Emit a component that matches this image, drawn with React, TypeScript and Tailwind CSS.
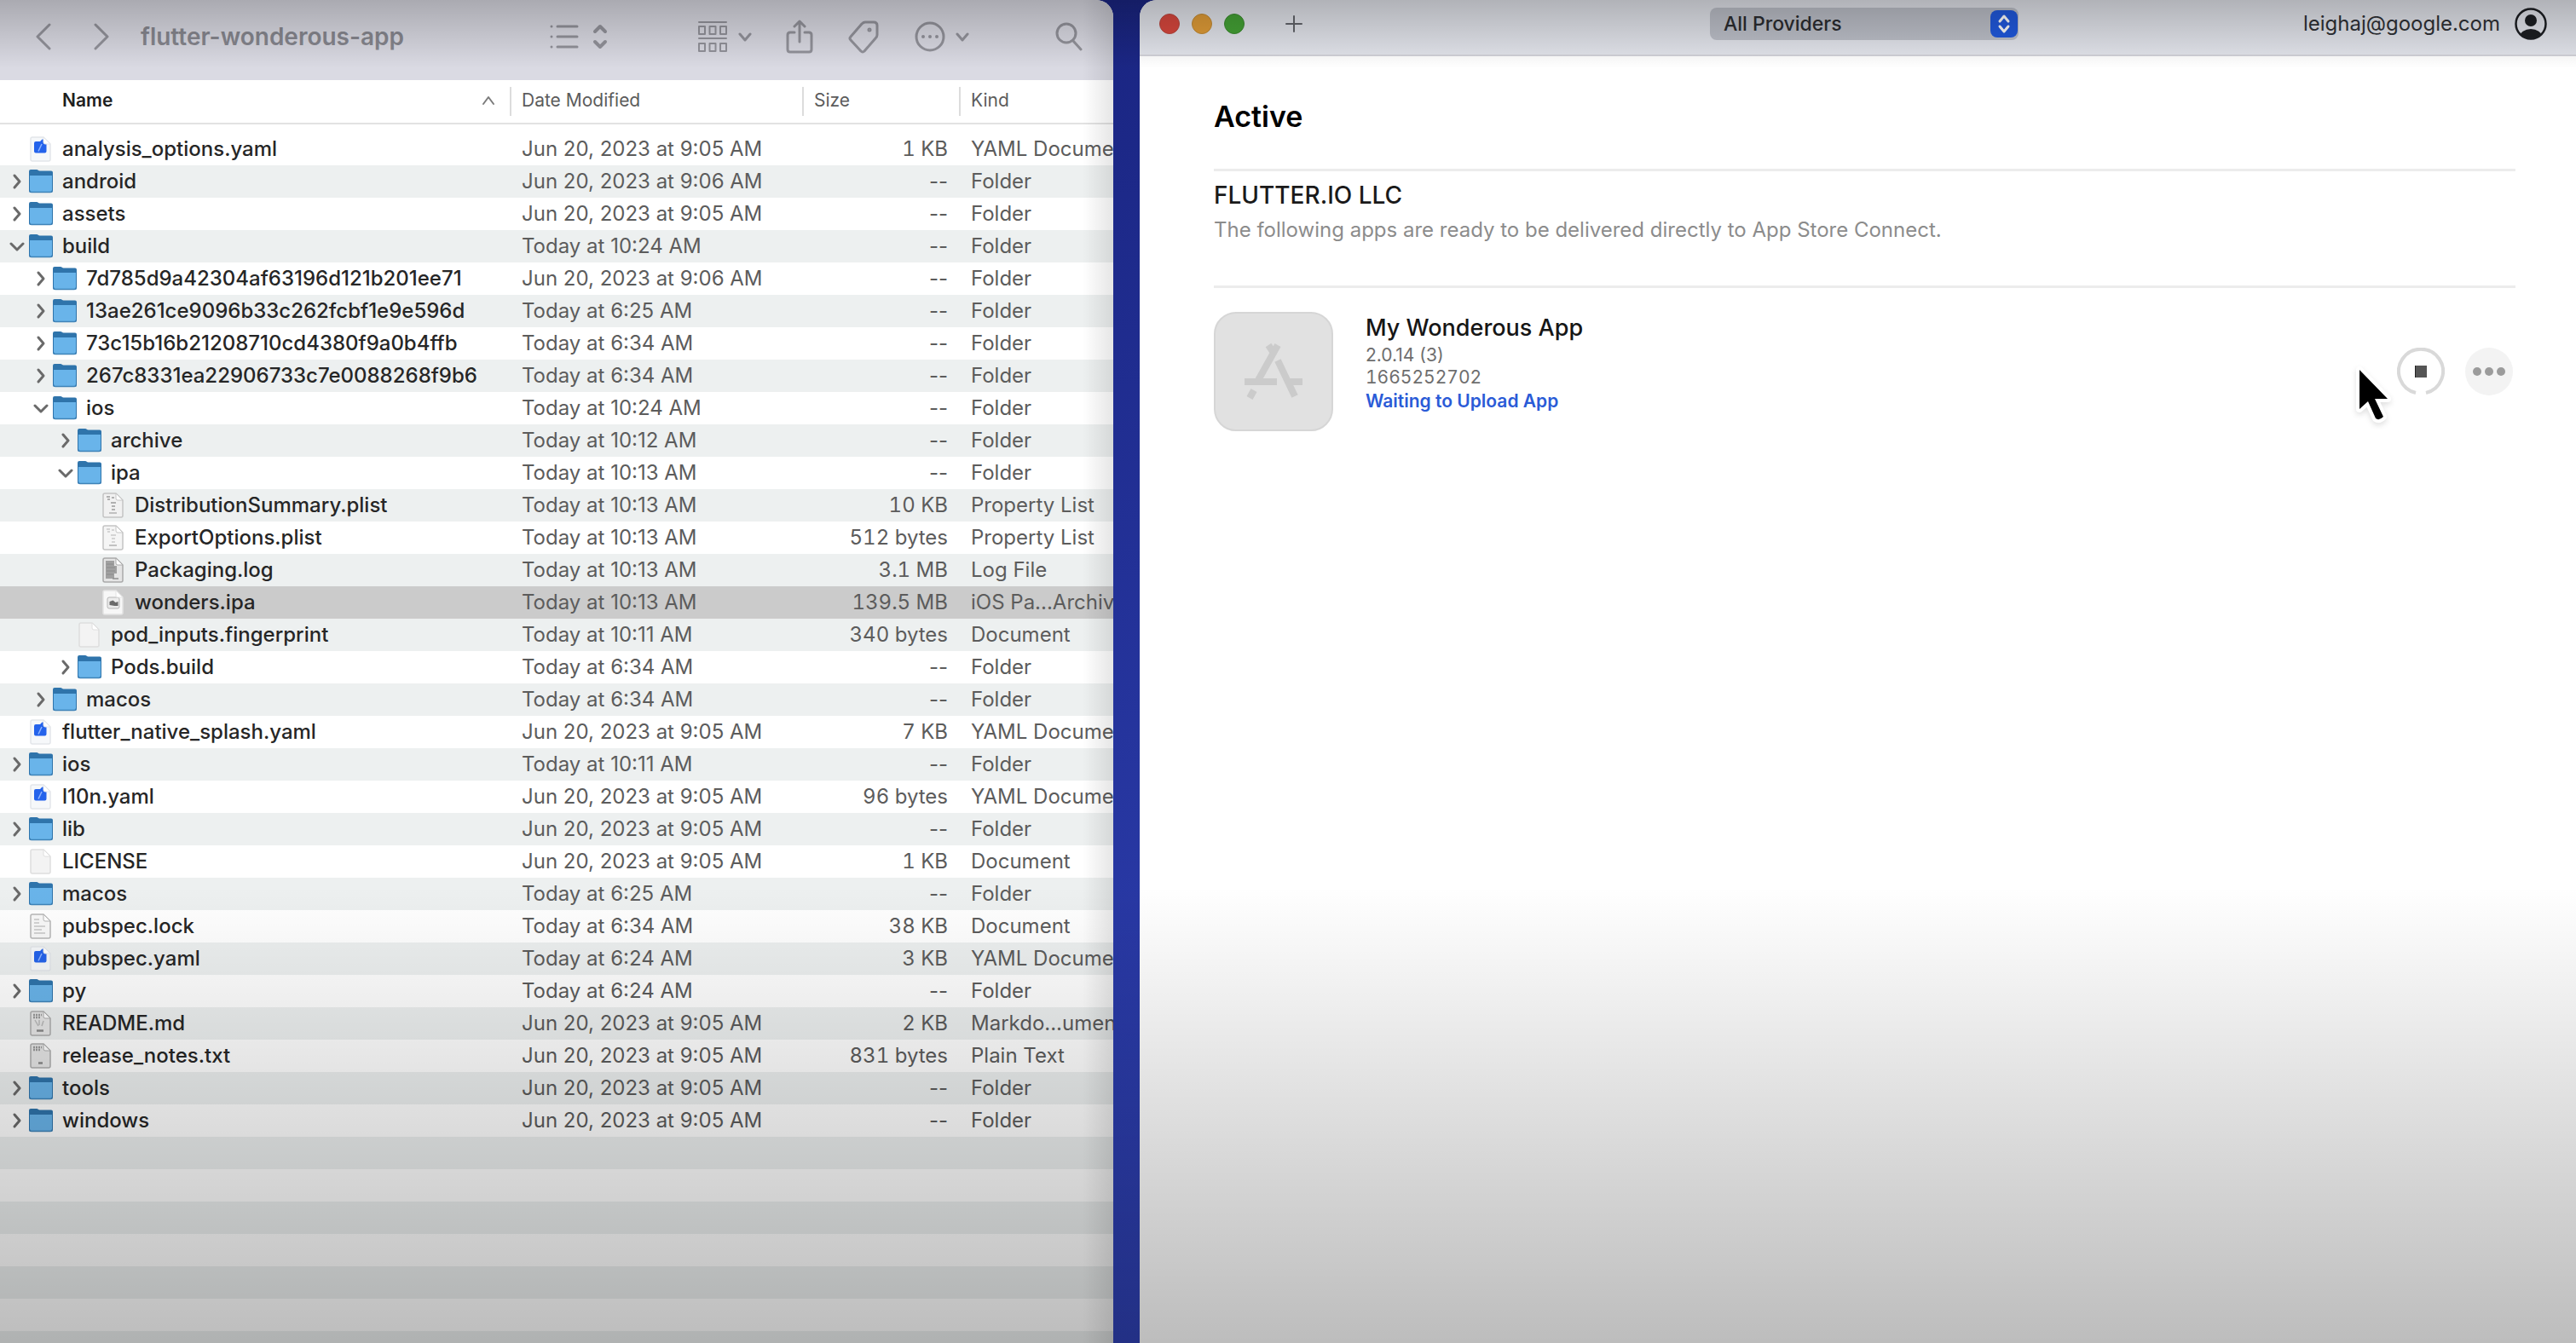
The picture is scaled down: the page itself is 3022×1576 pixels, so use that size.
import type { ReactNode } from "react";

type IconKind = "folder" | "flutter" | "blank" | "plist" | "plistLight" | "log" | "ipa" | "lock" | "md" | "txt";

type Entry = {
  name: string;
  level: 0 | 1 | 2 | 3;
  icon: IconKind;
  open?: boolean;
  selected?: boolean;
  date: string;
  size: string;
  kind: string;
};

const J5 = "Jun 20, 2023 at 9:05 AM";
const J6 = "Jun 20, 2023 at 9:06 AM";

function folder(name: string, level: Entry["level"], date: string, open = false): Entry {
  return { name, level, icon: "folder", open, date, size: "--", kind: "Folder" };
}

function file(name: string, level: Entry["level"], icon: IconKind, date: string, size: string, kind: string): Entry {
  return { name, level, icon, date, size, kind };
}

const entries: Entry[] = [
  file("analysis_options.yaml", 0, "flutter", J5, "1 KB", "YAML Document"),
  folder("android", 0, J6),
  folder("assets", 0, J5),
  folder("build", 0, "Today at 10:24 AM", true),
  folder("7d785d9a42304af63196d121b201ee71", 1, J6),
  folder("13ae261ce9096b33c262fcbf1e9e596d", 1, "Today at 6:25 AM"),
  folder("73c15b16b21208710cd4380f9a0b4ffb", 1, "Today at 6:34 AM"),
  folder("267c8331ea22906733c7e0088268f9b6", 1, "Today at 6:34 AM"),
  folder("ios", 1, "Today at 10:24 AM", true),
  folder("archive", 2, "Today at 10:12 AM"),
  folder("ipa", 2, "Today at 10:13 AM", true),
  file("DistributionSummary.plist", 3, "plist", "Today at 10:13 AM", "10 KB", "Property List"),
  file("ExportOptions.plist", 3, "plistLight", "Today at 10:13 AM", "512 bytes", "Property List"),
  file("Packaging.log", 3, "log", "Today at 10:13 AM", "3.1 MB", "Log File"),
  { ...file("wonders.ipa", 3, "ipa", "Today at 10:13 AM", "139.5 MB", "iOS Pa...Archive"), selected: true },
  file("pod_inputs.fingerprint", 2, "blank", "Today at 10:11 AM", "340 bytes", "Document"),
  folder("Pods.build", 2, "Today at 6:34 AM"),
  folder("macos", 1, "Today at 6:34 AM"),
  file("flutter_native_splash.yaml", 0, "flutter", J5, "7 KB", "YAML Document"),
  folder("ios", 0, "Today at 10:11 AM"),
  file("l10n.yaml", 0, "flutter", J5, "96 bytes", "YAML Document"),
  folder("lib", 0, J5),
  file("LICENSE", 0, "blank", J5, "1 KB", "Document"),
  folder("macos", 0, "Today at 6:25 AM"),
  file("pubspec.lock", 0, "lock", "Today at 6:34 AM", "38 KB", "Document"),
  file("pubspec.yaml", 0, "flutter", "Today at 6:24 AM", "3 KB", "YAML Document"),
  folder("py", 0, "Today at 6:24 AM"),
  file("README.md", 0, "md", J5, "2 KB", "Markdo...ument"),
  file("release_notes.txt", 0, "txt", J5, "831 bytes", "Plain Text"),
  folder("tools", 0, J5),
  folder("windows", 0, J5),
];

const indent = ["pl-2", "pl-[36px]", "pl-[65px]", "pl-[93px]"];

function Stroke({ className, box, width = 2, children }: { className: string; box: string; width?: number; children: ReactNode }) {
  return (
    <svg className={className} viewBox={box} fill="none" stroke="currentColor" strokeWidth={width} strokeLinecap="round" strokeLinejoin="round" aria-hidden="true">
      {children}
    </svg>
  );
}

function Page({ fill = "#fafafa", edge = "#c4c4c4", children }: { fill?: string; edge?: string; children?: ReactNode }) {
  return (
    <svg className="h-[30px] w-7 shrink-0" viewBox="0 0 28 30" aria-hidden="true">
      <path d="M4 1h13l8 8v18a2 2 0 0 1-2 2h-19a2 2 0 0 1-2-2v-24a2 2 0 0 1 2-2z" fill={fill} stroke={edge} strokeWidth="1.500" />
      {children}
      <path d="M17 1v6a2 2 0 0 0 2 2h6z" fill="#fff" stroke={edge} strokeLinejoin="round" />
    </svg>
  );
}

function FileIcon({ kind }: { kind: IconKind }) {
  switch (kind) {
    case "folder":
      return (
        <svg className="h-[30px] w-7 shrink-0" viewBox="0 0 28 30" aria-hidden="true">
          <path d="M0 3a2 2 0 0 1 2-2h7c1.500 0 2 1.500 3.500 1.500h13.500a2 2 0 0 1 2 2v21.500a2 2 0 0 1-2 2h-24a2 2 0 0 1-2-2z" fill="#2f74ab" />
          <path d="M1 8h26v17.500a2 2 0 0 1-2 2h-22a2 2 0 0 1-2-2z" fill="#69b4ea" />
          <path d="M1 25.500q0 2 2 2h22q2 0 2-2" fill="none" stroke="#3f83b8" strokeWidth="1.500" />
        </svg>
      );
    case "flutter":
      return (
        <Page fill="#f6f8fa" edge="#e3e6ea">
          <path d="M6 8q0-2 2-2h5l2.500-2.500h3.500v5h1.500v9q0 2-2 2h-10.500q-2 0-2-2z" fill="#2463eb" />
          <path d="M15 9l-4 8.500" stroke="#8fb4ff" strokeWidth="1.500" />
        </Page>
      );
    case "plist":
    case "plistLight":
      return (
        <Page fill={kind === "plist" ? "#f1f1f1" : "#f5f5f5"}>
          <path d="M6 5h4M7 8h3M12 6h3M11 12h6M12 16h4M12 20h4" stroke={kind === "plist" ? "#b0b0b0" : "#d4d4d4"} strokeWidth="2" />
          <path d="M9 24h9" stroke="#b0b0b0" strokeWidth="1.500" />
        </Page>
      );
    case "log":
      return (
        <Page fill="#e4e4e4" edge="#a9a9a9">
          <path d="M5 4h10v6h3v9h-3v6h-10z" fill="#a0a0a0" />
          <path d="M6 8h8M6 12h10M6 16h10M6 20h8" stroke="#8a8a8a" />
          <path d="M13 25h7" stroke="#8f8f8f" strokeWidth="1.500" />
        </Page>
      );
    case "ipa":
      return (
        <Page fill="#f7f7f7" edge="#e4e4e4">
          <rect x="7" y="9" width="14" height="13" rx="2" fill="#ececec" stroke="#b5b5b5" />
          <path d="M9.500 18v-4l4-1.500 3 2.500 3-1v5h-4z" fill="#6b6b6b" />
        </Page>
      );
    case "lock":
      return (
        <Page fill="#f8f8f8" edge="#b7b7b7">
          <path d="M6 7h6M6 11h6M6 15h13M6 19h9M6 23h13" stroke="#c6c6c6" strokeWidth="1.500" />
        </Page>
      );
    case "md":
    case "txt":
      return (
        <Page fill="#e6e6e6" edge="#adadad">
          <path d="M5 5h10M5 8h9" stroke="#999" strokeWidth="2.500" strokeDasharray="2 1" />
          {kind === "md" && <path d="M7 11l4 7M12 11v6M17 12l-2 6" stroke="#b9b9b9" strokeWidth="1.500" />}
          <path d={kind === "md" ? "M9 23.500h8" : "M11 23.500h5"} stroke="#8a8a8a" strokeWidth="2.500" />
        </Page>
      );
    default:
      return <Page fill="#f3f3f3" edge="#dedede" />;
  }
}

function ToolButton({ label, className, children }: { label: string; className: string; children: ReactNode }) {
  return (
    <button type="button" aria-label={label} className={`flex shrink-0 items-center ${className}`}>
      {children}
    </button>
  );
}

function SmallChevron() {
  return (
    <Stroke className="h-4 w-4" box="0 0 16 16" width={3}>
      <path d="M2 5l6 7 6-7" />
    </Stroke>
  );
}

function FinderToolbar() {
  return (
    <header className="flex h-[94px] shrink-0 items-center bg-[#dadae3] pr-9 pb-2 pl-10 text-[#93939b]">
      <ToolButton label="Back" className="mr-[49px]">
        <Stroke className="h-8 w-5" box="0 0 20 32" width={3}>
          <path d="M18 2l-14 14 14 14" />
        </Stroke>
      </ToolButton>
      <ToolButton label="Forward" className="mr-9">
        <Stroke className="h-8 w-5" box="0 0 20 32" width={3}>
          <path d="M3 2l14 14-14 14" />
        </Stroke>
      </ToolButton>
      <h1 className="text-[28px] leading-9 font-semibold whitespace-nowrap text-[#87878f]">flutter-wonderous-app</h1>
      <div className="flex flex-1 items-center justify-end">
        <ToolButton label="List view" className="mr-[104px] gap-[14px]">
          <Stroke className="h-8 w-9" box="0 0 36 32" width={3}>
            <path d="M10 4h23M10 16h23M10 28h23M3 4v0M3 16v0M3 28v0" />
          </Stroke>
          <Stroke className="h-8 w-5" box="0 0 20 32" width={4}>
            <path d="M4 10l6-6 6 6M4 22l6 6 6-6" />
          </Stroke>
        </ToolButton>
        <ToolButton label="Group" className="mr-[40px] gap-3">
          <Stroke className="h-10 w-9" box="0 0 36 40" width={2}>
            <path d="M2 3h32M2 22h32" />
            <path d="M2 8h7v9h-7zM14.500 8h7v9h-7zM27 8h7v9h-7zM2 28h7v9h-7zM14.500 28h7v9h-7zM27 28h7v9h-7z" />
          </Stroke>
          <SmallChevron />
        </ToolButton>
        <ToolButton label="Share" className="mr-[41px]">
          <Stroke className="h-10 w-8" box="0 0 32 40" width={3}>
            <path d="M10 15h-5q-3 0-3 3v17q0 3 3 3h22q3 0 3-3v-17q0-3-3-3h-5M16 26v-24M10 8l6-6 6 6" />
          </Stroke>
        </ToolButton>
        <ToolButton label="Tags" className="mr-[42px]">
          <Stroke className="h-10 w-9" box="0 0 36 40" width={3}>
            <path d="M3 20l13-15q2-2 4-2l10 0q4 0 4 4v11q0 2-2 4l-13 15q-2 2-4 0l-12-13q-2-2 0-4z" />
            <circle cx="25" cy="12" r="1" />
          </Stroke>
        </ToolButton>
        <ToolButton label="More actions" className="mr-[101px] gap-3">
          <Stroke className="h-9 w-9" box="0 0 36 36" width={3}>
            <circle cx="18" cy="18" r="16" />
            <path d="M10 18v0M18 18v0M26 18v0" strokeWidth="4" />
          </Stroke>
          <SmallChevron />
        </ToolButton>
        <ToolButton label="Search" className="">
          <Stroke className="h-9 w-8" box="0 0 32 36" width={3}>
            <circle cx="13" cy="14" r="11" />
            <path d="M21 23l9 10" />
          </Stroke>
        </ToolButton>
      </div>
    </header>
  );
}

function HeadCell({ children }: { children: ReactNode }) {
  return (
    <th scope="col" className="p-0 text-left font-normal text-[#5c5c5c]">
      <div className="flex h-[34px] items-center border-l-2 border-[#dcdcdc] pb-[3px] pl-3">{children}</div>
    </th>
  );
}

function EntryRow({ entry }: { entry: Entry }) {
  return (
    <tr className={entry.selected ? "h-[38px] bg-[#cbcbcb]" : "h-[38px] odd:bg-white even:bg-[#edf0f0]"}>
      <td className="p-0">
        <div className={`flex items-center ${indent[entry.level]}`}>
          {entry.icon === "folder" ? (
            <button type="button" aria-label={`Toggle ${entry.name}`} aria-expanded={entry.open} className="mr-1 flex h-6 w-[22px] shrink-0 items-center justify-center text-[#6a6a6a]">
              <Stroke className="h-5 w-5" box="0 0 20 20" width={3}>
                <path d={entry.open ? "M4 7l7 7 7-7" : "M8 3l6 7-6 7"} />
              </Stroke>
            </button>
          ) : (
            <span className="mr-1 w-[22px] shrink-0" />
          )}
          <FileIcon kind={entry.icon} />
          <span className="ml-[11px] font-medium whitespace-nowrap text-[#262626]">{entry.name}</span>
        </div>
      </td>
      <td className="p-0 pl-[14px] whitespace-nowrap">{entry.date}</td>
      <td className={entry.size === "--" ? "p-0 pr-[13px] text-right" : "p-0 pr-[13px] text-right whitespace-nowrap tabular-nums"}>{entry.size}</td>
      <td className="overflow-hidden p-0 pl-[14px] whitespace-nowrap">{entry.kind}</td>
    </tr>
  );
}

function FinderWindow() {
  return (
    <section className="relative flex min-w-0 flex-col overflow-hidden rounded-tr-[20px] bg-white">
      <FinderToolbar />
      <table className="w-full table-fixed border-collapse text-[24px] leading-[30px] text-[#5c5c5c]">
        <colgroup>
          <col />
          <col className="w-[343px]" />
          <col className="w-[184px]" />
          <col className="w-[181px]" />
        </colgroup>
        <thead className="text-[21px]">
          <tr className="h-[51px] border-b-2 border-[#e2e2e2]">
            <th scope="col" aria-sort="ascending" className="p-0 text-left font-semibold text-[#1e1e1e]">
              <div className="flex items-center justify-between pr-4 pb-[3px] pl-[73px]">
                Name
                <Stroke className="h-4 w-[18px] text-[#7b7b7b]" box="0 0 18 16" width={2}>
                  <path d="M3 12l6-8 6 8" />
                </Stroke>
              </div>
            </th>
            <HeadCell>Date Modified</HeadCell>
            <HeadCell>Size</HeadCell>
            <HeadCell>Kind</HeadCell>
          </tr>
          <tr className="h-[11px]" aria-hidden="true">
            <td colSpan={4} className="p-0" />
          </tr>
        </thead>
        <tbody>
          {entries.map((entry, i) => (
            <EntryRow key={i} entry={entry} />
          ))}
        </tbody>
      </table>
      <div className="flex-1 bg-[repeating-linear-gradient(to_bottom,#edf0f0_0px,#edf0f0_38px,#ffffff_38px,#ffffff_76px)]" />
      <div className="pointer-events-none absolute inset-y-0 right-0 w-9 bg-linear-to-r from-transparent to-black/10" />
    </section>
  );
}

function TransporterBar() {
  return (
    <header className="grid h-[66px] shrink-0 grid-cols-[25fr_362px_24fr] items-center border-b-2 border-[#d2d2d9] bg-[#e3e5ec] pr-[34px] pb-2 pl-[23px]">
      <div className="flex items-center gap-[14px]">
        <button type="button" aria-label="Close" className="size-6 rounded-full border border-[#b9473f] bg-[#d8473d]" />
        <button type="button" aria-label="Minimize" className="size-6 rounded-full border border-[#c08a35] bg-[#e09c37]" />
        <button type="button" aria-label="Zoom" className="size-6 rounded-full border border-[#3c8a30] bg-[#44a235]" />
        <button type="button" aria-label="Add app" className="ml-[34px] text-[#63656b]">
          <Stroke className="size-5" box="0 0 20 20" width={2}>
            <path d="M10 1v18M1 10h18" />
          </Stroke>
        </button>
      </div>
      <div className="relative">
        <select aria-label="Provider" className="h-[38px] w-full appearance-none rounded-lg bg-[#bdc0c9] pr-9 pl-4 text-[23px] font-medium text-[#2b2c30]">
          <option>All Providers</option>
        </select>
        <span className="pointer-events-none absolute top-[3px] right-px flex size-8 items-center justify-center rounded-lg bg-[#2059de] text-white">
          <Stroke className="h-6 w-5" box="0 0 20 24" width={3}>
            <path d="M5 9l5-6 5 6M5 15l5 6 5-6" />
          </Stroke>
        </span>
      </div>
      <div className="flex items-center justify-end gap-[17px]">
        <span className="text-[24px] leading-[30px] text-[#2f3136]">leighaj@google.com</span>
        <button type="button" aria-label="Account">
          <svg className="size-[38px]" viewBox="0 0 38 38" aria-hidden="true">
            <clipPath id="avatar">
              <circle cx="19" cy="19" r="17" />
            </clipPath>
            <g clipPath="url(#avatar)" fill="#1c1e22">
              <circle cx="19" cy="15" r="7" />
              <ellipse cx="19" cy="34" rx="13" ry="9" />
            </g>
            <circle cx="19" cy="19" r="17.500" fill="none" stroke="#1c1e22" strokeWidth="2.500" />
          </svg>
        </button>
      </div>
    </header>
  );
}

function AppArtwork() {
  return (
    <div className="flex size-[140px] shrink-0 items-center justify-center rounded-[26px] border-2 border-[#d6d6d6] bg-[#e1e1e1]">
      <svg className="size-[70px]" viewBox="0 0 70 70" fill="none" stroke="#cbcbcb" strokeWidth="8" aria-hidden="true">
        <path d="M40 4L16 47M29 4l6 9M40 22l20 42M1 47h38M51 47h18M12 57l-5 9" />
      </svg>
    </div>
  );
}

function Cursor() {
  return (
    <svg className="pointer-events-none absolute top-[91px] right-[144px] h-[72px] w-11 drop-shadow-md" viewBox="0 0 44 72" aria-hidden="true">
      <path d="M5 5v46l10-9 9 20q4 3 9-2l-10-21h15z" fill="#000" stroke="#fff" strokeWidth="8" strokeLinejoin="round" paintOrder="stroke" />
    </svg>
  );
}

function TransporterWindow() {
  return (
    <section className="flex min-w-0 flex-col overflow-hidden rounded-tl-[20px] bg-white">
      <TransporterBar />
      <main className="flex flex-col pr-[71px] pl-[87px]">
        <h2 className="pt-[51px] text-[34px] leading-10 font-semibold text-black">Active</h2>
        <section className="mt-[41px] border-t-[3px] border-[#ececec] pt-3">
          <h3 className="text-[28px] leading-8 font-medium text-[#1a1a1a]">FLUTTER.IO LLC</h3>
          <p className="mt-[10px] text-[24px] leading-[30px] text-[#8c8c8c]">The following apps are ready to be delivered directly to App Store Connect.</p>
          <div className="relative mt-[50px] flex border-t-[3px] border-[#ececec] pt-[28px]">
            <AppArtwork />
            <div className="ml-[38px] flex-1">
              <h4 className="text-[27px] leading-[38px] font-medium text-[#161616]">My Wonderous App</h4>
              <p className="text-[21px] leading-[26px] text-[#6e6e6e]">2.0.14 (3)</p>
              <p className="text-[21px] leading-[26px] text-[#6e6e6e] tabular-nums">1665252702</p>
              <p className="mt-0.5 text-[21px] leading-[26px] font-semibold text-[#2a5bd7]">Waiting to Upload App</p>
            </div>
            <div className="mr-[3px] flex h-[140px] items-center gap-6">
              <button type="button" aria-label="Stop upload" className="text-[#d9d9d9]">
                <svg className="size-14" viewBox="0 0 56 56" fill="none" aria-hidden="true">
                  <path d="M34 53A26 26 0 1 0 22 53" stroke="currentColor" strokeWidth="4" />
                  <rect x="21" y="21" width="14" height="14" fill="#555" />
                  <path d="M21.500 21v14" stroke="#222" />
                </svg>
              </button>
              <button type="button" aria-label="More options" className="flex size-14 items-center justify-center gap-1 rounded-full bg-[#f3f3f3]">
                <span className="size-[10px] rounded-full bg-[#9b9b9b]" />
                <span className="size-[10px] rounded-full bg-[#9b9b9b]" />
                <span className="size-[10px] rounded-full bg-[#9b9b9b]" />
              </button>
            </div>
            <Cursor />
          </div>
        </section>
      </main>
    </section>
  );
}

export default function App() {
  return (
    <div className="relative grid min-h-screen grid-cols-[1306fr_1685fr] gap-[31px] overflow-hidden bg-linear-to-b from-[#1a2582] to-[#2f41b4] font-['Inter',sans-serif]">
      <FinderWindow />
      <TransporterWindow />
      <div className="pointer-events-none absolute inset-x-0 top-0 h-20 bg-linear-to-b from-black/22 to-transparent" />
      <div className="pointer-events-none absolute inset-x-0 bottom-0 h-[536px] bg-linear-to-b from-transparent to-black/26" />
    </div>
  );
}
